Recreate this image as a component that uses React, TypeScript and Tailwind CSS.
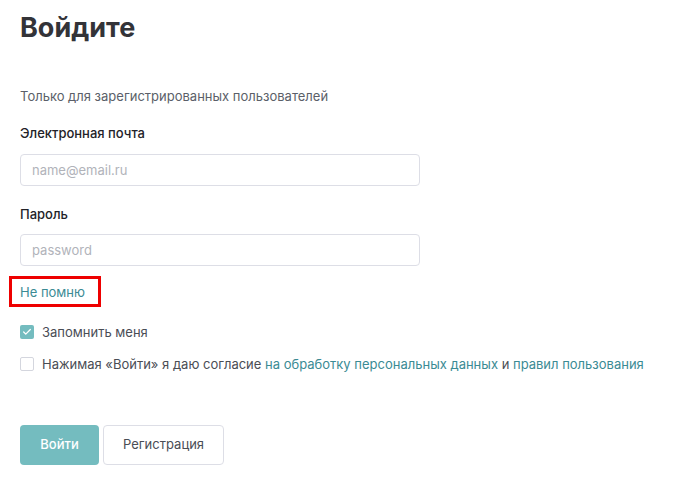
import { Check } from "lucide-react";

export default function App() {
  return (
    <div className="min-h-[482px] w-[680px] bg-white px-5 pt-[10px] font-['Inter','Roboto',sans-serif] text-[#2b2b33]">
      <h1 className="text-[27px] font-bold leading-[36px] text-[#333338]">Войдите</h1>

      <p className="mt-[42px] text-[13px] leading-4 text-[#5b5f69]">Только для зарегистрированных пользователей</p>

      <label className="mt-[21px] block text-[13px] font-medium leading-4 text-[#222228]">Электронная почта</label>
      <input
        className="mt-[13px] block h-8 w-[400px] rounded border border-[#dddee6] px-[11px] text-[13px] outline-none placeholder:text-[#b1b3ba]"
        placeholder="name@email.ru"
      />

      <label className="mt-[20px] block text-[13px] font-medium leading-4 text-[#222228]">Пароль</label>
      <input
        className="mt-[12px] block h-8 w-[400px] rounded border border-[#dddee6] px-[11px] text-[13px] outline-none placeholder:text-[#b1b3ba]"
        placeholder="password"
      />

      <div className="-ml-[11px] mt-[10px] flex h-[31px] w-[92px] items-center border-[3px] border-[#ee0000] pl-[8px]">
        <a className="text-[13px] leading-4 text-[#3b8b94]">Не помню</a>
      </div>

      <div className="mt-[17px] flex items-center gap-2">
        <span className="flex h-[14px] w-[14px] items-center justify-center rounded-[2px] bg-[#74bcbf]">
          <Check size={10} strokeWidth={3} className="text-white" />
        </span>
        <span className="text-[13px] leading-4 text-[#4a4d55]">Запомнить меня</span>
      </div>

      <div className="mt-[16px] flex items-center gap-2">
        <span className="h-[14px] w-[14px] rounded-[2px] border border-[#d4d6de] bg-white" />
        <span className="text-[13px] leading-4 text-[#4a4d55]">
          Нажимая «Войти» я даю согласие <a className="text-[#3b8b94]">на обработку персональных данных</a> и{" "}
          <a className="text-[#3b8b94]">правил пользования</a>
        </span>
      </div>

      <div className="mt-[53px] flex gap-1">
        <button className="h-10 w-[79px] rounded bg-[#74bcbf] text-[13px] font-medium text-white">Войти</button>
        <button className="h-10 w-[121px] rounded border border-[#dddee6] bg-white text-[13px] text-[#4a4d55]">
          Регистрация
        </button>
      </div>
    </div>
  );
}
